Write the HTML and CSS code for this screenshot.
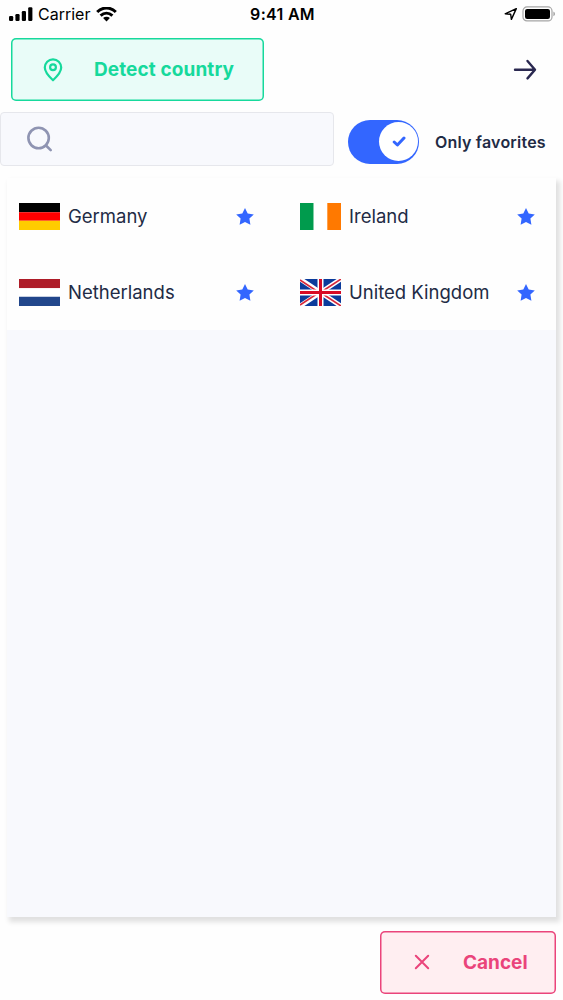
FILE: index.html
```html
<!DOCTYPE html>
<html lang="en">
<head>
<meta charset="utf-8">
<title>Select country</title>
<link rel="stylesheet" href="styles.css">
</head>
<body>
<div class="screen">
  <div class="status">
    <div class="status-left">
      <svg width="24" height="15" viewBox="0 0 24 15"><rect x="0" y="9" width="4.2" height="5" rx="1.2"/><rect x="6.4" y="7" width="4.2" height="7" rx="1.2"/><rect x="12.8" y="4" width="4.2" height="10" rx="1.2"/><rect x="19.2" y=".2" width="4.2" height="13.8" rx="1.2"/></svg>
      <span class="carrier">Carrier</span>
      <svg width="21" height="15" viewBox="0 0 21 15" fill="none" stroke="#000" stroke-width="3"><path d="M1.200 5C6.500-.3 14.500-.3 19.800 5"/><path d="M4.600 8.600c3.600-3.300 8.200-3.300 11.800 0"/><path d="M10.500 14.500l-3.400-3.400c1.900-1.700 4.900-1.700 6.800 0z" fill="#000" stroke="none"/></svg>
    </div>
    <span class="time">9:41 AM</span>
    <div class="status-right">
      <svg width="14" height="14" viewBox="0 0 14 14" fill="none" stroke="#000" stroke-width="1.400" stroke-linejoin="round"><path d="M12.300 1.600L1.200 6.800l5.500.5.700 5.100z"/></svg>
      <svg width="34" height="16" viewBox="0 0 34 16"><rect x="1" y=".9" width="29" height="14" rx="4" fill="none" stroke="#a5a5a5" stroke-width="1.200"/><rect x="3" y="2.900" width="25" height="10" rx="2.200"/><path d="M31.500 5.500c1.800.8 1.800 4 0 4.800z" fill="#8c8c8c"/></svg>
    </div>
  </div>
  <div class="header">
    <button class="button success">
      <svg width="20" height="24" viewBox="0 0 20 24" fill="none" stroke="currentColor" stroke-width="2.200"><path d="M10 22.300C6.400 19 1.800 14.400 1.800 9.600a8.200 8.300 0 0 1 16.400 0c0 4.800-4.600 9.400-8.200 12.700z" stroke-linejoin="round"/><circle cx="10" cy="9.200" r="2.900"/></svg>
      <span>Detect country</span>
    </button>
    <svg class="arrow" width="24" height="22" viewBox="0 0 24 22" fill="none" stroke="#2a2850" stroke-width="2.400" stroke-linecap="round" stroke-linejoin="round"><path d="M2 10.700H22M14.500 2L22 10.700l-7.500 8.700"/></svg>
  </div>
  <div class="filters">
    <div class="search">
      <svg width="27" height="27" viewBox="0 0 27 27" fill="none" stroke="#8f94b2" stroke-width="2.600" stroke-linecap="round"><circle cx="12.600" cy="12" r="10.200"/><path d="M20 19.500l4.700 4.700"/></svg>
    </div>
    <div class="toggle"><div class="thumb"><svg width="14" height="12" viewBox="0 0 14 12" fill="none" stroke="#3366ff" stroke-width="3" stroke-linecap="round" stroke-linejoin="round"><path d="M2.200 6l3.200 3L12 2"/></svg></div></div>
    <span class="toggle-label">Only favorites</span>
  </div>
  <div class="list">
    <div class="grid">
      <div class="country">
        <svg class="flag" viewBox="0 0 41 27" preserveAspectRatio="none"><path d="M0 0h41v9.300H0z"/><path fill="#f00" d="M0 9.300h41v8.400H0z"/><path fill="#fc0" d="M0 17.700h41V27H0z"/></svg>
        <span class="name">Germany</span>
        <svg class="star" viewBox="0 0 20 19"><path d="M10 1.100l2.700 5.500 6.100.8-4.400 4.200 1 6.100L10 14.900l-5.400 2.800 1-6.100L1.200 7.400l6.100-.8z"/></svg>
      </div>
      <div class="country">
        <svg class="flag" viewBox="0 0 41 27" preserveAspectRatio="none"><path fill="#009b4d" d="M0 0h13.700v27H0z"/><path fill="#fff" d="M13.700 0h13.600v27H13.700z"/><path fill="#ff7900" d="M27.300 0H41v27H27.300z"/></svg>
        <span class="name">Ireland</span>
        <svg class="star" viewBox="0 0 20 19"><path d="M10 1.100l2.700 5.500 6.100.8-4.400 4.200 1 6.100L10 14.900l-5.400 2.800 1-6.100L1.200 7.400l6.100-.8z"/></svg>
      </div>
      <div class="country">
        <svg class="flag" viewBox="0 0 41 27" preserveAspectRatio="none"><path fill="#ae1c28" d="M0 0h41v9.300H0z"/><path fill="#fff" d="M0 9.300h41v8.400H0z"/><path fill="#21468b" d="M0 17.700h41V27H0z"/></svg>
        <span class="name">Netherlands</span>
        <svg class="star" viewBox="0 0 20 19"><path d="M10 1.100l2.700 5.500 6.100.8-4.400 4.200 1 6.100L10 14.900l-5.400 2.800 1-6.100L1.200 7.400l6.100-.8z"/></svg>
      </div>
      <div class="country">
        <svg class="flag" viewBox="0 0 41 27" preserveAspectRatio="none"><path fill="#0b3b9b" d="M0 0h41v27H0z"/><path stroke="#fff" stroke-width="4.800" d="M0 0l41 27M41 0L0 27"/><path stroke="#d8283a" stroke-width="1.600" d="M0 1l19 12.500M22 14.500L41 27M41 0L22 12.500M19 13.500L0 26"/><path stroke="#fff" stroke-width="6" d="M20.500 0v27M0 13.500h41"/><path stroke="#d80b25" stroke-width="3" d="M20.500 0v27M0 13.500h41"/></svg>
        <span class="name">United Kingdom</span>
        <svg class="star" viewBox="0 0 20 19"><path d="M10 1.100l2.700 5.500 6.100.8-4.400 4.200 1 6.100L10 14.900l-5.400 2.800 1-6.100L1.200 7.400l6.100-.8z"/></svg>
      </div>
    </div>
  </div>
  <div class="footer">
    <button class="button danger">
      <svg width="16" height="16" viewBox="0 0 16 16" fill="none" stroke="currentColor" stroke-width="2" stroke-linecap="round"><path d="M1.800 1.800l12.400 12.400M14.200 1.800L1.800 14.200"/></svg>
      <span>Cancel</span>
    </button>
  </div>
</div>
</body>
</html>
```
FILE: styles.css
```css
* { box-sizing: border-box; }
body { margin: 0; background: #fff; font-family: Inter, "Liberation Sans", sans-serif; color: #222b45; }
svg { display: block; flex: none; }
span { white-space: nowrap; }
.screen { width: 563px; height: 1000px; display: flex; flex-direction: column; overflow: hidden; background: #fefefe; }
.status { height: 28px; padding: 0 7px 0 9px; display: grid; grid-template-columns: 1fr auto 1fr; align-items: center; color: #000; }
.status-left, .status-right { display: flex; align-items: center; }
.status-left { gap: 5px; }
.status-right { justify-content: flex-end; gap: 4px; }
.carrier { font-size: 16px; width: 53px; }
.time { font-size: 16px; font-weight: 600; letter-spacing: 0.3px; }
.header { margin-top: 10px; padding: 0 26px 0 11px; display: flex; align-items: center; justify-content: space-between; }
.button { height: 63px; display: flex; align-items: center; border: 0; box-shadow: inset 0 0 0 1.5px currentColor; border-radius: 5px; font: 700 19px Inter, sans-serif; }
.success { width: 253px; padding: 0 0 0 32px; gap: 31px; color: #16d99c; background: #e9fcf8; letter-spacing: 0.1px; }
.danger { width: 176px; padding: 0 0 1px 34px; gap: 33px; color: #ea447b; background: #ffeef1; }
.filters { margin-top: 11px; height: 54px; display: flex; align-items: center; }
.search { width: 334px; height: 54px; padding: 0 0 0 25px; display: flex; align-items: center; border: 1px solid #e6e7ec; border-radius: 4px; background: #f8f9fd; }
.toggle { margin: 5px 0 0 14px; width: 71px; height: 44px; padding: 0 1px; display: flex; align-items: center; justify-content: flex-end; border-radius: 22px; background: #3366ff; }
.thumb { width: 39px; height: 39px; display: flex; align-items: center; justify-content: center; border-radius: 50%; background: #fff; }
.toggle-label { margin: 5px 0 0 16px; font-size: 16px; font-weight: 600; letter-spacing: 0.2px; }
.list { margin: 12px 7px 0; height: 739px; background: #f8f9fd; box-shadow: 3px 4px 5px 1px rgba(0, 0, 0, 0.12); }
.grid { height: 152px; display: grid; grid-template-columns: 281px 268px; grid-template-rows: 76px 76px; background: #fefefe; }
.country { display: flex; align-items: center; padding-left: 12px; }
.flag { width: 41px; height: 27px; }
.name { width: 167px; margin-left: 8px; font-size: 18.5px; }
.star { width: 20px; height: 19px; fill: #3366ff; }
.footer { margin-top: 14px; padding-right: 7px; display: flex; justify-content: flex-end; }
```
